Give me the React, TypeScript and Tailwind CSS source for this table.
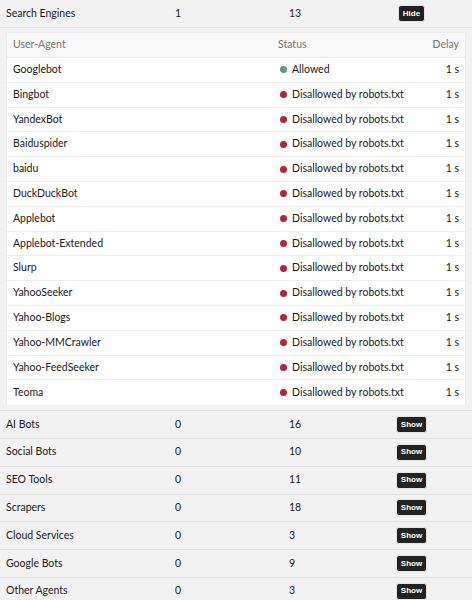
import React from 'react';

const engines = [
  { name: 'Googlebot', allowed: true },
  { name: 'Bingbot', allowed: false },
  { name: 'YandexBot', allowed: false },
  { name: 'Baiduspider', allowed: false },
  { name: 'baidu', allowed: false },
  { name: 'DuckDuckBot', allowed: false },
  { name: 'Applebot', allowed: false },
  { name: 'Applebot-Extended', allowed: false },
  { name: 'Slurp', allowed: false },
  { name: 'YahooSeeker', allowed: false },
  { name: 'Yahoo-Blogs', allowed: false },
  { name: 'Yahoo-MMCrawler', allowed: false },
  { name: 'Yahoo-FeedSeeker', allowed: false },
  { name: 'Teoma', allowed: false },
];

const groups = [
  { name: 'AI Bots', blocked: 0, total: 16 },
  { name: 'Social Bots', blocked: 0, total: 10 },
  { name: 'SEO Tools', blocked: 0, total: 11 },
  { name: 'Scrapers', blocked: 0, total: 18 },
  { name: 'Cloud Services', blocked: 0, total: 3 },
  { name: 'Google Bots', blocked: 0, total: 9 },
  { name: 'Other Agents', blocked: 0, total: 3 },
];

const Btn = ({ label }: { label: string }) => (
  <button className="h-[17px] rounded-[3px] border border-[#e6e6e6] bg-[#222] px-[4px] text-[8px] font-bold leading-none text-white [font-family:'Liberation_Sans',Arial,sans-serif]">
    {label}
  </button>
);

const GroupRow = ({ name, blocked, total, label, h }: { name: string; blocked: number; total: number; label: string; h: string }) => (
  <div className={`grid grid-cols-[175px_114px_94px_57px] items-center border-b border-[#e2e2e2] ${h}`}>
    <div className="pl-[6px]">{name}</div>
    <div>{blocked}</div>
    <div>{total}</div>
    <div className="flex justify-center">
      <Btn label={label} />
    </div>
  </div>
);

export default function App() {
  return (
    <div className="w-[472px] h-[600px] overflow-hidden bg-[#f2f2f2] text-[10.5px] text-[#222] [font-family:Lato,sans-serif]">
      <GroupRow name="Search Engines" blocked={1} total={13} label="Hide" h="h-[28px]" />
      <div className="px-[6px] pt-[4px] pb-[4px] border-b border-[#e2e2e2]">
        <div className="bg-white border border-[#ececec]">
          <div className="grid grid-cols-[265px_1fr_auto] items-center h-[25px] bg-[#f8f8f8] text-[#777] px-[6px] border-b border-[#f0f0f0]">
            <div>User-Agent</div>
            <div>Status</div>
            <div className="text-right">Delay</div>
          </div>
          {engines.map((e, i) => (
            <div
              key={e.name}
              className={`grid grid-cols-[265px_1fr_auto] items-center h-[24.8px] px-[6px] whitespace-nowrap ${i < engines.length - 1 ? 'border-b border-[#eeeeee]' : ''}`}
            >
              <div>{e.name}</div>
              <div className="flex items-center gap-[5px] pl-[2px]">
                <span className={`inline-block w-[7px] h-[7px] rounded-full ${e.allowed ? 'bg-[#62996f]' : 'bg-[#b8233a]'}`} />
                <span>{e.allowed ? 'Allowed' : 'Disallowed by robots.txt'}</span>
              </div>
              <div className="text-right">1 s</div>
            </div>
          ))}
        </div>
      </div>
      {groups.map((g) => (
        <GroupRow key={g.name} name={g.name} blocked={g.blocked} total={g.total} label="Show" h="h-[27.8px]" />
      ))}
    </div>
  );
}
